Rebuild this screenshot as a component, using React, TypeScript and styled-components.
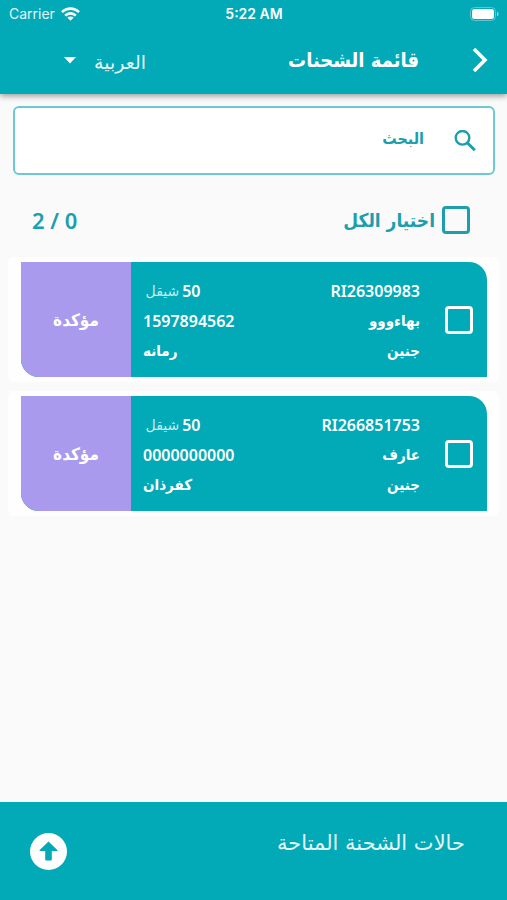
import React, { useState } from "react";
import styled, { createGlobalStyle } from "styled-components";

const teal = "#02a9b7";
const ink = "#1b9fad";
const condensed = `"DejaVu Sans Condensed", "DejaVu Sans", sans-serif`;

const GlobalStyle = createGlobalStyle`
  *, *::before, *::after { box-sizing: border-box; }
  body {
    margin: 0;
    background: #fafafa;
    font-family: "DejaVu Sans", sans-serif;
  }
  button, input, select { font: inherit; color: inherit; margin: 0; }
`;

const Screen = styled.div`
  min-height: 100vh;
  display: flex;
  flex-direction: column;
`;

const TopBar = styled.header`
  background: ${teal};
  color: #fff;
  box-shadow: 0 2px 6px rgba(0, 0, 0, 0.4);
`;

const StatusBar = styled.div`
  height: 28px;
  padding: 0 8px 0 9px;
  display: grid;
  grid-template-columns: 1fr auto 1fr;
  align-items: center;
  font-family: Inter, sans-serif;
  font-size: 14px;
  line-height: 28px;
`;

const Carrier = styled.span`
  display: flex;
  align-items: center;
  gap: 6px;
  color: #e2f6f8;
`;

const Clock = styled.time`
  font-weight: 600;
`;

const BatteryIcon = styled.svg`
  justify-self: end;
`;

const Toolbar = styled.div`
  height: 66px;
  padding: 0 18px 2px;
  display: flex;
  align-items: center;
`;

const BackButton = styled.button`
  width: 30px;
  height: 40px;
  padding: 0;
  border: 0;
  background: none;
  display: flex;
  align-items: center;
`;

const Title = styled.h1`
  flex: 1;
  margin: 0 40px 0 0;
  font-family: ${condensed};
  font-size: 20px;
  line-height: 32px;
  font-weight: 700;
`;

const Language = styled.label`
  position: relative;
  margin-left: 42px;
  padding-top: 4px;
  display: flex;
`;

const LanguageSelect = styled.select`
  width: 86px;
  height: 36px;
  padding: 0;
  border: 0;
  appearance: none;
  background: none;
  font-size: 19px;
  line-height: 36px;
  color: #e2f6f8;

  option { color: #222; }
`;

const Caret = styled.svg`
  position: absolute;
  left: 4px;
  top: 17px;
  pointer-events: none;
`;

const Content = styled.main`
  flex: 1;
  padding: 12px 8px;
`;

const SearchBox = styled.label`
  height: 69px;
  margin: 0 4px 0 5px;
  padding: 0 17px;
  display: flex;
  align-items: center;
  gap: 30px;
  border: 2px solid #6cc8d1;
  border-radius: 6px;
  background: #fff;
  color: ${ink};
`;

const SearchInput = styled.input`
  flex: 1;
  min-width: 0;
  height: 40px;
  padding: 0 0 4px;
  border: 0;
  outline: 0;
  background: none;
  font-family: ${condensed};
  font-size: 16px;
  font-weight: 700;

  &::placeholder { color: ${ink}; opacity: 1; }
`;

const SelectionRow = styled.div`
  height: 74px;
  margin-top: 8px;
  padding: 0 29px 0 24px;
  display: flex;
  align-items: center;
  justify-content: space-between;
  color: ${ink};
  font-family: ${condensed};
  font-size: 19px;
  font-weight: 700;
`;

const SelectAll = styled.label`
  display: flex;
  align-items: center;
  gap: 7px;
`;

const Counter = styled.output`
  font-family: "Noto Sans", sans-serif;
  font-size: 22px;
  font-weight: 600;
`;

const CheckBox = styled.input`
  appearance: none;
  flex: none;
  width: 28px;
  height: 28px;
  border: 3px solid currentColor;
  border-radius: 4px;

  &:checked { box-shadow: inset 0 0 0 4px ${teal}; background: currentColor; }
`;

const List = styled.ul`
  margin: 0;
  padding: 0;
  list-style: none;
  display: flex;
  flex-direction: column;
  gap: 9px;
`;

const Item = styled.li`
  padding: 5px 12px 5px 13px;
  border-radius: 6px;
  background: #fefefe;
`;

const Card = styled.article`
  height: 115px;
  display: flex;
  overflow: hidden;
  border-radius: 0 18px 0 18px;
  background: ${teal};
  color: #fff;
`;

const Pick = styled.label`
  width: 67px;
  padding-right: 14px;
  display: flex;
  align-items: center;
`;

const Details = styled.div`
  flex: 1;
  padding: 14px 0 0 12px;
  display: grid;
  grid-template-columns: auto auto;
  grid-auto-rows: 30px;
  justify-content: space-between;
  font-family: ${condensed};
  font-size: 15px;
  line-height: 30px;
  font-weight: 700;
`;

const Code = styled.span<{ $end?: boolean }>`
  font-family: "Noto Sans", sans-serif;
  font-size: 16px;
  font-weight: 600;
  text-align: ${(p) => (p.$end ? "left" : "right")};
`;

const Place = styled.span<{ $end?: boolean }>`
  text-align: ${(p) => (p.$end ? "left" : "right")};
`;

const Price = styled.span`
  padding-right: 34px;
  display: flex;
  gap: 3px;
`;

const Currency = styled.small`
  font-family: "DejaVu Sans", sans-serif;
  font-size: 14px;
  font-weight: 400;
  color: #c4ecf0;
`;

const Status = styled.div`
  width: 110px;
  display: flex;
  align-items: center;
  justify-content: center;
  background: #a99aee;
  font-family: ${condensed};
  font-size: 17px;
  font-weight: 700;
`;

const Footer = styled.footer`
  height: 98px;
  padding: 0 42px 0 30px;
  display: flex;
  align-items: center;
  justify-content: space-between;
  background: ${teal};
  color: #e2f6f8;
`;

const FooterTitle = styled.h2`
  margin: 0;
  padding-bottom: 16px;
  font-size: 21px;
  line-height: 32px;
  font-weight: 400;
`;

const UpButton = styled.button`
  width: 37px;
  height: 37px;
  padding: 0;
  border: 0;
  border-radius: 50%;
  background: #fff;
  display: flex;
  align-items: center;
  justify-content: center;
`;

const shipments = [
  { id: "RI26309983", name: "بهاءووو", city: "جنين", price: 50, phone: "1597894562", area: "رمانه" },
  { id: "RI266851753", name: "عارف", city: "جنين", price: 50, phone: "0000000000", area: "كفرذان" },
];

export default function App() {
  const [picked, setPicked] = useState<string[]>([]);
  const all = picked.length === shipments.length;
  const toggle = (id: string) =>
    setPicked((p) => (p.includes(id) ? p.filter((x) => x !== id) : [...p, id]));

  return (
    <Screen dir="rtl" lang="ar">
      <GlobalStyle />
      <TopBar>
        <StatusBar dir="ltr">
          <Carrier>
            Carrier
            <svg width="19" height="14" viewBox="0 0 19 14" fill="none" stroke="#fff" strokeWidth="2.6" aria-hidden="true">
              <path d="M1 5.2C5.8.4 13.2.4 18 5.2" />
              <path d="M4.2 8.6c3-3 7.6-3 10.6 0" />
              <path d="M9.5 13.8 6.3 10.6c1.8-1.6 4.6-1.6 6.4 0z" fill="#fff" stroke="none" />
            </svg>
          </Carrier>
          <Clock>5:22 AM</Clock>
          <BatteryIcon width="29" height="14" viewBox="0 0 29 14" aria-hidden="true">
            <rect x=".5" y=".5" width="25" height="13" rx="4" fill="none" stroke="#5cc8d1" />
            <rect x="2" y="2" width="22" height="10" rx="2.5" fill="#fff" />
            <path d="M27 4.5c2.2.8 2.2 4.2 0 5z" fill="#7fd4db" />
          </BatteryIcon>
        </StatusBar>
        <Toolbar>
          <BackButton type="button" aria-label="رجوع">
            <svg width="20" height="28" viewBox="0 0 20 28" fill="none" stroke="#fff" strokeWidth="3.6" aria-hidden="true">
              <path d="M5 3 16 14 5 25" />
            </svg>
          </BackButton>
          <Title>قائمة الشحنات</Title>
          <Language>
            <LanguageSelect aria-label="اللغة" defaultValue="ar">
              <option value="ar">العربية</option>
            </LanguageSelect>
            <Caret width="12" height="7" viewBox="0 0 12 7" aria-hidden="true">
              <path d="M0 0h12L6 6.5z" fill="#fff" />
            </Caret>
          </Language>
        </Toolbar>
      </TopBar>

      <Content>
        <SearchBox>
          <svg width="22" height="22" viewBox="0 0 22 22" fill="none" stroke={ink} strokeWidth="2.4" aria-hidden="true">
            <circle cx="8.5" cy="7.8" r="6.8" />
            <path d="M13.3 12.8 20.8 20.3" strokeWidth="3" />
          </svg>
          <SearchInput type="text" aria-label="البحث" placeholder="البحث" />
        </SearchBox>

        <SelectionRow>
          <SelectAll>
            <CheckBox
              type="checkbox"
              checked={all}
              onChange={() => setPicked(all ? [] : shipments.map((s) => s.id))}
            />
            اختيار الكل
          </SelectAll>
          <Counter>{`${picked.length} / ${shipments.length}`}</Counter>
        </SelectionRow>

        <List>
          {shipments.map((s) => (
            <Item key={s.id}>
              <Card>
                <Pick>
                  <CheckBox
                    type="checkbox"
                    aria-label={s.id}
                    checked={picked.includes(s.id)}
                    onChange={() => toggle(s.id)}
                  />
                </Pick>
                <Details>
                  <Code>{s.id}</Code>
                  <Price>
                    <Code>{s.price}</Code>
                    <Currency>شيقل</Currency>
                  </Price>
                  <Place>{s.name}</Place>
                  <Code $end>{s.phone}</Code>
                  <Place>{s.city}</Place>
                  <Place $end>{s.area}</Place>
                </Details>
                <Status>مؤكدة</Status>
              </Card>
            </Item>
          ))}
        </List>
      </Content>

      <Footer>
        <FooterTitle>حالات الشحنة المتاحة</FooterTitle>
        <UpButton type="button" aria-label="عرض الحالات">
          <svg width="19" height="20" viewBox="0 0 19 20" fill={teal} aria-hidden="true">
            <path d="M9.5.5 18.3 9q.8 1-.5 1H12.8v8.500q0 1-1 1H7.200q-1 0-1-1V10H1.200q-1.300 0-.5-1z" />
          </svg>
        </UpButton>
      </Footer>
    </Screen>
  );
}
